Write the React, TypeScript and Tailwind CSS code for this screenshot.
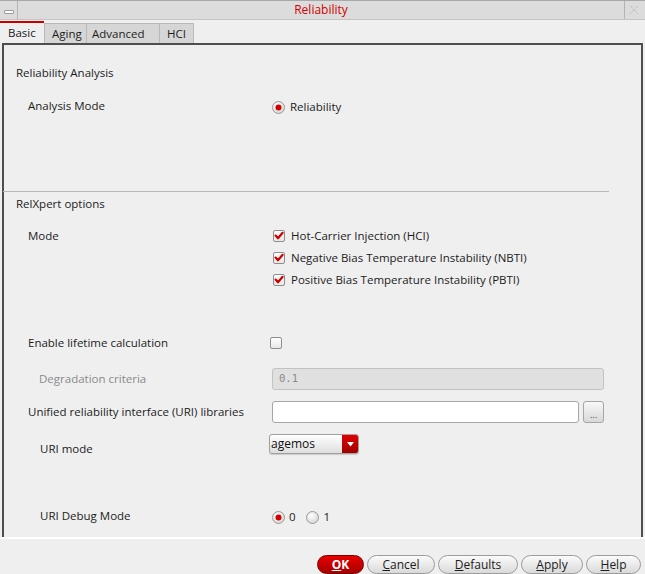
import React from 'react';

const Radio = ({ checked }: { checked?: boolean }) => (
  <svg width="13" height="13" viewBox="0 0 13 13" className="shrink-0">
    <defs>
      <radialGradient id={checked ? 'rg1' : 'rg0'} cx="0.4" cy="0.35" r="0.7">
        <stop offset="0" stopColor="#ffffff" />
        <stop offset="1" stopColor="#d4d4d4" />
      </radialGradient>
    </defs>
    <circle cx="6.5" cy="6.5" r="6" fill={`url(#${checked ? 'rg1' : 'rg0'})`} stroke="#9a9a9a" strokeWidth="1" />
    {checked && <circle cx="6.5" cy="6.5" r="3" fill="#d40000" />}
  </svg>
);

const Check = ({ checked }: { checked?: boolean }) => (
  <svg width="12" height="12" viewBox="0 0 12 12" className="shrink-0">
    <defs>
      <linearGradient id="cbg" x1="0" y1="0" x2="0" y2="1">
        <stop offset="0" stopColor="#ffffff" />
        <stop offset="1" stopColor="#e6e6e6" />
      </linearGradient>
    </defs>
    <rect x="0.5" y="0.5" width="11" height="11" rx="1.5" fill="url(#cbg)" stroke="#8e8e8e" />
    {checked && (
      <path d="M2.6 5.6 L5 8.3 L9.6 2.8" fill="none" stroke="#d00000" strokeWidth="2.2" strokeLinecap="round" strokeLinejoin="round" />
    )}
  </svg>
);

const Btn = ({ label, w, primary }: { label: string; w: string; primary?: boolean }) => (
  <div
    className={`${w} h-[19px] rounded-full border flex items-center justify-center text-[12px] ${
      primary
        ? 'border-[#7a0000] bg-gradient-to-b from-[#e80000] to-[#a80000] text-white font-bold'
        : 'border-[#9c9c9c] bg-gradient-to-b from-[#fbfbfb] to-[#dadada] text-[#1c1c1c]'
    }`}
  >
    <span>
      <span className="underline">{label[0]}</span>
      {label.slice(1)}
    </span>
  </div>
);

export default function App() {
  return (
    <div className="w-[645px] h-[574px] overflow-hidden bg-[#efefef] font-['Open_Sans',sans-serif] text-[11.5px] text-[#1c1c1c]">
      {/* title bar */}
      <div className="h-[20px] flex bg-[#dcdcdc] border-t border-[#a8a8a8] border-b border-b-[#c4c4c4]">
        <div className="w-[18px] border-r border-[#b4b4b4] flex items-center justify-center">
          <div className="w-[10px] h-[4px] mt-[3px] bg-white border border-[#9a9a9a] rounded-[1px]" />
        </div>
        <div className="flex-1 flex items-center justify-center text-[12px] text-[#d40000] leading-none">
          Reliability
        </div>
        <div className="w-[19px] mr-[2px] border-l border-[#b4b4b4] flex items-center justify-center">
          <svg width="12" height="12" viewBox="0 0 12 12">
            <path d="M2 2 L10 10 M10 2 L2 10" stroke="#b8b8b8" strokeWidth="1" strokeDasharray="1 1" fill="none" />
            <path d="M3 2 L10 9 M9 2 L2 9" stroke="#d0d0d0" strokeWidth="1" strokeDasharray="1 1" fill="none" />
          </svg>
        </div>
      </div>

      {/* tabs */}
      <div className="h-[23px] flex items-end">
        <div className="w-[44px] h-[22px] border-t-2 border-[#c80000] bg-[#efefef] flex items-center pl-[8px]">
          Basic
        </div>
        <div className="w-[43px] h-[20px] bg-[#d6d6d6] border border-b-0 border-[#b9b9b9] flex items-center pl-[7px]">
          Aging
        </div>
        <div className="w-[73px] h-[20px] bg-[#d6d6d6] border border-b-0 border-l-0 border-[#b9b9b9] flex items-center pl-[5px]">
          Advanced
        </div>
        <div className="w-[34px] h-[20px] bg-[#d6d6d6] border border-b-0 border-l-0 border-[#b9b9b9] flex items-center pl-[7px]">
          HCI
        </div>
      </div>

      {/* panel */}
      <div className="ml-[2px] w-[641px] h-[494px] border-t-2 border-l-2 border-r-2 border-[#4e4e4e] flex flex-col">
        <div className="mt-[20px] h-[16px] leading-[16px] pl-[12px]">Reliability Analysis</div>

        <div className="mt-[16px] h-[20px] flex items-center">
          <div className="w-[266px] pl-[24px] -mt-[3px]">Analysis Mode</div>
          <div className="flex items-center ml-[2px]">
            <Radio checked />
            <span className="ml-[5px]">Reliability</span>
          </div>
        </div>

        <div className="mt-[74px] -ml-[1px] w-[606px] h-px bg-[#b8b8b8]" />

        <div className="mt-[4px] h-[16px] leading-[16px] pl-[12px]">RelXpert options</div>

        <div className="mt-[13px] flex flex-col">
          {[
            'Hot-Carrier Injection (HCI)',
            'Negative Bias Temperature Instability (NBTI)',
            'Positive Bias Temperature Instability (PBTI)',
          ].map((t, i) => (
            <div key={t} className="h-[22px] flex items-center">
              <div className="w-[266px] pl-[24px]">{i === 0 ? 'Mode' : ''}</div>
              <div className="flex items-center ml-[3px]">
                <Check checked />
                <span className="ml-[6px]">{t}</span>
              </div>
            </div>
          ))}
        </div>

        <div className="mt-[42px] h-[20px] flex items-center">
          <div className="w-[266px] pl-[24px]">Enable lifetime calculation</div>
          <Check />
        </div>

        <div className="mt-[15px] h-[22px] flex items-center">
          <div className="w-[266px] pl-[35px] text-[#8a8a8a]">Degradation criteria</div>
          <div className="ml-[2px] w-[332px] h-[22px] rounded-[3px] border border-[#c2c2c2] bg-[#e0e0e0] flex items-center pl-[6px] font-['DejaVu_Sans_Mono',monospace] text-[10.5px] text-[#8a8a8a]">
            0.1
          </div>
        </div>

        <div className="mt-[11px] h-[22px] flex items-center">
          <div className="w-[266px] pl-[24px]">Unified reliability interface (URI) libraries</div>
          <div className="ml-[2px] w-[307px] h-[22px] rounded-[3px] border border-[#a6a6a6] bg-white" />
          <div className="ml-[4px] w-[21px] h-[22px] rounded-[3px] border border-[#a6a6a6] bg-gradient-to-b from-[#f8f8f8] to-[#d8d8d8] flex items-center justify-center text-[9px] text-[#444] leading-none pt-[4px]">
            ...
          </div>
        </div>

        <div className="mt-[11px] h-[20px] flex items-start">
          <div className="w-[266px] pl-[36px] pt-[6px]">URI mode</div>
          <div className="-ml-[1px] w-[90px] h-[20px] rounded-[3px] border border-[#a0a0a0] bg-gradient-to-b from-[#ffffff] to-[#dedede] flex overflow-hidden shadow-[0_1px_1px_rgba(0,0,0,0.15)]">
            <div className="flex-1 flex items-center pl-px text-[12px] text-[#111]">agemos</div>
            <div className="w-[16px] bg-gradient-to-b from-[#e00000] to-[#a00000] flex items-center justify-center">
              <svg width="7" height="5" viewBox="0 0 7 5">
                <path d="M0 0 H7 L3.5 4.5 Z" fill="#fff" />
              </svg>
            </div>
          </div>
        </div>

        <div className="mt-[53px] h-[20px] flex items-center">
          <div className="w-[266px] pl-[36px] -mt-[3px]">URI Debug Mode</div>
          <div className="flex items-center ml-[2px]">
            <Radio checked />
            <span className="ml-[4px]">0</span>
            <span className="ml-[10px]">
              <Radio />
            </span>
            <span className="ml-[5px]">1</span>
          </div>
        </div>
      </div>

      <div className="h-[2px] bg-white" />

      {/* buttons */}
      <div className="mt-[16px] flex justify-end gap-[3px] pr-[4px]">
        <Btn label="OK" w="w-[47px]" primary />
        <Btn label="Cancel" w="w-[68px]" />
        <Btn label="Defaults" w="w-[80px]" />
        <Btn label="Apply" w="w-[62px]" />
        <Btn label="Help" w="w-[55px]" />
      </div>
    </div>
  );
}
